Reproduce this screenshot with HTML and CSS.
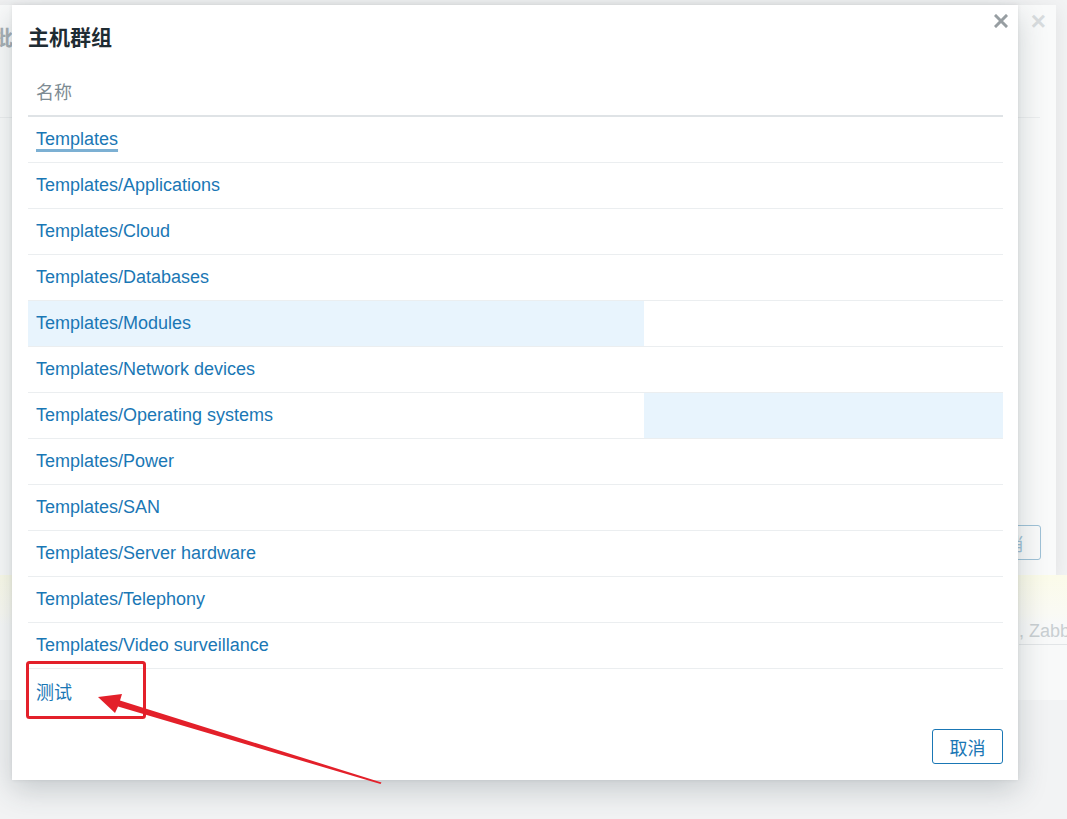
FILE: index.html
```html
<!DOCTYPE html>
<html lang="zh-CN">
<head>
    <meta charset="UTF-8">
    <title>主机群组</title>
    <link rel="stylesheet" href="styles.css">
</head>
<body>
    <div class="page">
        <div class="back-dialog">
            <div class="back-title">批量更新</div>
            <div class="back-close">&times;</div>
            <div class="back-tabs">
                <span class="back-tab active">主机</span>
            </div>
            <div class="back-row">日志</div>
            <div class="back-footer">
                <button class="back-btn">取消</button>
            </div>
        </div>
        <div class="notice"></div>
        <div class="footer-text">, Zabbix</div>
    </div>

    <div class="modal">
        <div class="modal-head">
            <h2>主机群组</h2>
            <button class="modal-close" title="关闭">
                <svg width="14" height="14" viewBox="0 0 14 14"><path d="M2 2L12 12M12 2L2 12" stroke="#979ea2" stroke-width="3" stroke-linecap="square"/></svg>
            </button>
        </div>

        <table class="list">
            <thead>
                <tr><th colspan="2">名称</th></tr>
            </thead>
            <tbody>
                <tr><td colspan="2"><a class="focused" href="#">Templates</a></td></tr>
                <tr><td colspan="2"><a href="#">Templates/Applications</a></td></tr>
                <tr><td colspan="2"><a href="#">Templates/Cloud</a></td></tr>
                <tr><td colspan="2"><a href="#">Templates/Databases</a></td></tr>
                <tr><td class="col-name hover"><a href="#">Templates/Modules</a></td><td></td></tr>
                <tr><td colspan="2"><a href="#">Templates/Network devices</a></td></tr>
                <tr><td class="col-name"><a href="#">Templates/Operating systems</a></td><td class="hover"></td></tr>
                <tr><td colspan="2"><a href="#">Templates/Power</a></td></tr>
                <tr><td colspan="2"><a href="#">Templates/SAN</a></td></tr>
                <tr><td colspan="2"><a href="#">Templates/Server hardware</a></td></tr>
                <tr><td colspan="2"><a href="#">Templates/Telephony</a></td></tr>
                <tr><td colspan="2"><a href="#">Templates/Video surveillance</a></td></tr>
                <tr><td colspan="2"><a href="#">测试</a></td></tr>
            </tbody>
        </table>

        <div class="modal-foot">
            <button class="btn-alt">取消</button>
        </div>
    </div>

    <!-- screenshot annotation -->
    <svg class="annotation" width="1067" height="819" viewBox="0 0 1067 819">
        <rect x="27.5" y="662.5" width="117" height="55" rx="2" fill="none" stroke="#e3202a" stroke-width="3"/>
        <polygon fill="#e3202a" points="98,697 122,694 120,700.5 381.5,782.5 380.5,784 118,706.5 115,713"/>
    </svg>
</body>
</html>
```

FILE: styles.css
```css
* {
    box-sizing: border-box;
}
body {
    margin: 0;
    width: 1067px;
    height: 819px;
    overflow: hidden;
    background-color: #f2f3f4;
    font-family: "Liberation Sans", Arial, "Noto Sans CJK SC", sans-serif;
    font-size: 18px;
    position: relative;
}

/* faded page behind the popup */
.page {
    position: absolute;
    inset: 0;
}
.back-dialog {
    position: absolute;
    left: -24px;
    top: 5px;
    width: 1080px;
    height: 570px;
    background-color: #f9fafa;
    box-shadow: 0 4px 18px rgba(0, 0, 0, 0.08);
    padding: 21px 16px 0;
}
.back-title {
    font-size: 21px;
    font-weight: bold;
    color: #a7b0b5;
    line-height: 24px;
}
.back-close {
    position: absolute;
    right: 10px;
    top: 1px;
    font-size: 26px;
    font-weight: bold;
    color: #d8dcde;
}
.back-tabs {
    margin-top: 30px;
    border-bottom: 1px solid #eceeef;
}
.back-tab {
    display: inline-block;
    color: #c0c7ca;
    padding: 0 4px 8px;
    margin-left: 24px;
    border-bottom: 3px solid #a9c6da;
}
.back-row {
    margin-top: 270px;
    margin-left: 26px;
    color: #c6cccf;
}
.back-footer {
    position: absolute;
    right: 15px;
    bottom: 15px;
}
.back-btn {
    font: inherit;
    color: #9fc2d7;
    background: transparent;
    border: 1px solid #9fc2d7;
    border-radius: 3px;
    width: 71px;
    height: 35px;
}
.notice {
    position: absolute;
    left: 0;
    right: 0;
    top: 575px;
    height: 125px;
    background: linear-gradient(#fbfbe9, #fafaf4 30%, #f8f9f9 40%, #f8f9f9);
}
.footer-text {
    position: absolute;
    left: 1019px;
    top: 621px;
    color: #c9cfd2;
    padding-bottom: 2px;
    border-bottom: 1px solid #e2e5e7;
    white-space: nowrap;
}

/* popup */
.modal {
    position: absolute;
    left: 12px;
    top: 5px;
    width: 1006px;
    height: 775px;
    background-color: #fff;
    box-shadow: 0 10px 28px rgba(40, 60, 70, 0.22), 0 0 4px rgba(0, 0, 0, 0.08);
    padding: 0 15px 16px 16px;
    display: flex;
    flex-direction: column;
}
.modal-head {
    display: flex;
    justify-content: space-between;
    align-items: flex-start;
    padding-top: 21px;
}
.modal-head h2 {
    margin: 0;
    font-size: 21px;
    line-height: 24px;
    font-weight: bold;
    color: #1f2c33;
}
.modal-close {
    background: none;
    border: none;
    padding: 0;
    margin: -12px -5px 0 0;
    width: 14px;
    height: 14px;
    cursor: pointer;
}
.list {
    width: 100%;
    border-collapse: collapse;
    margin-top: 20px;
}
.list th {
    text-align: left;
    font-weight: normal;
    color: #7d8b93;
    height: 46px;
    padding: 0 8px 4px;
    border-bottom: 2px solid #dfe3e6;
}
.list td {
    height: 46px;
    padding: 0 8px;
    border-bottom: 1px solid #ebeef0;
}
.list tbody tr:last-child td {
    border-bottom: none;
}
.list .col-name {
    width: 616px;
}
.list .hover {
    background-color: #e8f4fd;
}
.list a {
    color: #1a77b5;
    text-decoration: none;
}
.list a.focused {
    text-decoration: underline;
    text-decoration-color: #7cb0d3;
    text-decoration-thickness: 3px;
    text-underline-offset: 4px;
}
.modal-foot {
    margin-top: auto;
    display: flex;
    justify-content: flex-end;
}
.btn-alt {
    font: inherit;
    color: #1a77b5;
    background: #fff;
    border: 1px solid #1a77b5;
    border-radius: 3px;
    width: 71px;
    height: 35px;
    cursor: pointer;
}

.annotation {
    position: absolute;
    left: 0;
    top: 0;
    pointer-events: none;
}
```
